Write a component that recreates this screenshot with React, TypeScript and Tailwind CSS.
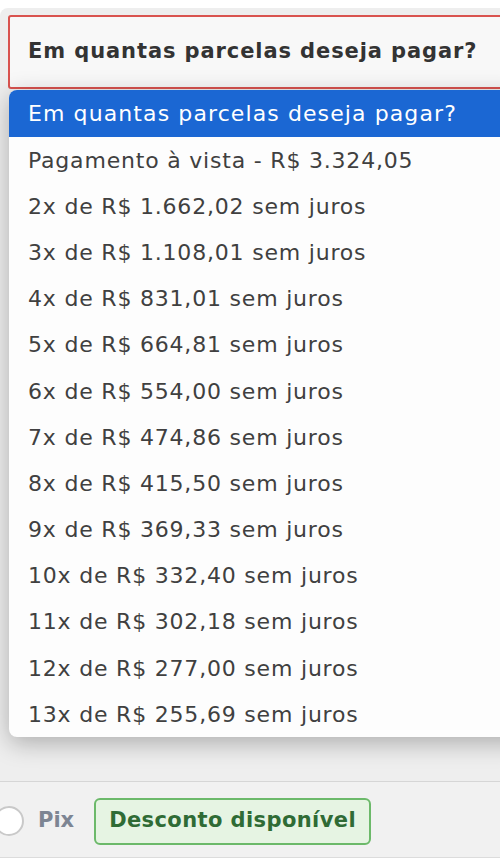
const options = [
  "Pagamento à vista - R$ 3.324,05",
  "2x de R$ 1.662,02 sem juros",
  "3x de R$ 1.108,01 sem juros",
  "4x de R$ 831,01 sem juros",
  "5x de R$ 664,81 sem juros",
  "6x de R$ 554,00 sem juros",
  "7x de R$ 474,86 sem juros",
  "8x de R$ 415,50 sem juros",
  "9x de R$ 369,33 sem juros",
  "10x de R$ 332,40 sem juros",
  "11x de R$ 302,18 sem juros",
  "12x de R$ 277,00 sem juros",
  "13x de R$ 255,69 sem juros",
];

export default function App() {
  return (
    <div className="relative w-[500px] h-[861px] overflow-hidden bg-white font-['DejaVu_Sans',sans-serif]">
      {/* page behind the open select */}
      <div className="mt-2 h-[774px] rounded-tl-lg bg-[#eeeeee] pt-[7px] pl-2 border-b border-[#d6d6d6]">
        <div className="flex h-[74px] w-[520px] items-center rounded-[3px] border-2 border-[#d9534f] bg-[#f8f8f8] pl-[18px]">
          <span className="text-[21px] font-bold tracking-[0.9px] text-[#333333]">
            Em quantas parcelas deseja pagar?
          </span>
        </div>
      </div>

      <div className="flex h-[76px] items-center border-b border-[#dcdcdc] bg-[#f1f1f1] pt-[3px]">
        <span className="-ml-[6px] h-[30px] w-[30px] shrink-0 rounded-full border-2 border-[#c9c9c9] bg-white" />
        <span className="ml-[14px] text-[21px] font-bold text-[#7d8593]">Pix</span>
        <span className="ml-[20px] flex h-[47px] items-center rounded-md border-2 border-[#6cb96a] bg-[#e6f4e3] px-[13px] text-[21px] font-bold tracking-[0.4px] text-[#2f6b35]">
          Desconto disponível
        </span>
      </div>

      {/* open dropdown list */}
      <div className="absolute left-[9px] top-[90px] w-[520px] overflow-hidden rounded-lg bg-[#fdfdfd] shadow-[0_6px_24px_rgba(0,0,0,0.28)]">
        <div className="flex h-[47px] items-center bg-[#1b67d3] pl-[19px] text-[22px] tracking-[1.1px] text-white">
          Em quantas parcelas deseja pagar?
        </div>
        {options.map((o) => (
          <div
            key={o}
            className="flex h-[46.2px] items-center pl-[19px] text-[22px] tracking-[0.8px] text-[#404040]"
          >
            {o}
          </div>
        ))}
      </div>
    </div>
  );
}
